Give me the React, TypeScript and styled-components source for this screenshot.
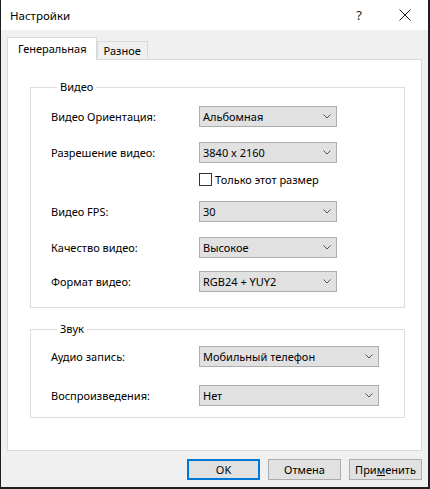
import styled, { createGlobalStyle } from "styled-components";

const GlobalStyle = createGlobalStyle`
  body {
    margin: 0;
    font-family: "Noto Sans", "Liberation Sans", sans-serif;
    font-size: 11px;
    color: #000;
  }
`;

const Window = styled.div`
  width: 430px;
  height: 489px;
  box-sizing: border-box;
  border-left: 1px solid #1f1f1f;
  border-right: 2px solid #1f1f1f;
  border-bottom: 2px solid #1f1f1f;
  display: flex;
  flex-direction: column;
  background: #f0f0f0;
`;

const TitleBar = styled.div`
  height: 30px;
  background: #fff;
  display: flex;
  align-items: center;
  padding-left: 9px;
  flex-shrink: 0;
`;

const Title = styled.div`
  flex: 1;
  font-size: 11.5px;
`;

const TitleButton = styled.div`
  width: 46px;
  height: 30px;
  display: flex;
  align-items: center;
  justify-content: center;
  font-size: 13px;
  color: #222;
`;

const Body = styled.div`
  flex: 1;
  padding: 7px 6px 0 6px;
  display: flex;
  flex-direction: column;
`;

const TabRow = styled.div`
  display: flex;
  align-items: flex-end;
  height: 22px;
`;

const Tab = styled.div<{ $active?: boolean }>`
  box-sizing: border-box;
  border: 1px solid #d9d9d9;
  border-bottom: none;
  background: ${(p) => (p.$active ? "#fff" : "#f0f0f0")};
  height: ${(p) => (p.$active ? "23px" : "18px")};
  margin-bottom: ${(p) => (p.$active ? "-1px" : "0")};
  padding: ${(p) => (p.$active ? "3px 9px 0 10px" : "0 6px 0 6px")};
  position: relative;
  z-index: ${(p) => (p.$active ? 1 : 0)};
  display: flex;
  align-items: ${(p) => (p.$active ? "flex-start" : "center")};
`;

const Panel = styled.div`
  box-sizing: border-box;
  height: 392px;
  border: 1px solid #d9d9d9;
  background: #fff;
  padding: 19px 0 0 22px;
`;

const Group = styled.fieldset<{ $top?: number }>`
  width: 375px;
  box-sizing: border-box;
  margin: ${(p) => p.$top ?? 0}px 0 0 0;
  border: 1px solid #dcdcdc;
  padding: 0 0 0 20px;
`;

const Legend = styled.legend`
  margin-left: 6px;
  padding: 0 3px;
  line-height: 16px;
  font-size: 11px;
`;

const Row = styled.div<{ $top: number }>`
  display: flex;
  align-items: center;
  height: 21px;
  margin-top: ${(p) => p.$top}px;
`;

const Label = styled.div`
  width: 148px;
`;

const Select = styled.div<{ $width: number }>`
  width: ${(p) => p.$width}px;
  height: 21px;
  box-sizing: border-box;
  border: 1px solid #adadad;
  background: #e1e1e1;
  padding: 0 5px 0 3px;
  display: flex;
  align-items: center;
  justify-content: space-between;
`;

const CheckRow = styled.div<{ $top: number }>`
  display: flex;
  align-items: center;
  height: 13px;
  margin: ${(p) => p.$top}px 0 0 148px;
  gap: 3px;
`;

const CheckBox = styled.div`
  width: 13px;
  height: 13px;
  box-sizing: border-box;
  border: 1px solid #333;
  background: #fff;
`;

const Spacer = styled.div<{ $h: number }>`
  height: ${(p) => p.$h}px;
`;

const ButtonRow = styled.div`
  display: flex;
  justify-content: flex-end;
  gap: 8px;
  margin-top: 8px;
`;

const Button = styled.div<{ $default?: boolean }>`
  width: 73px;
  height: 21px;
  box-sizing: border-box;
  background: #e1e1e1;
  border: ${(p) => (p.$default ? "2px solid #0078d7" : "1px solid #adadad")};
  display: flex;
  align-items: center;
  justify-content: center;
`;

const Chevron = () => (
  <svg width="8" height="5" viewBox="0 0 8 5">
    <polyline points="0.5,0.5 4,4 7.5,0.5" fill="none" stroke="#555" strokeWidth="1" />
  </svg>
);

const Combo = ({ value, width }: { value: string; width: number }) => (
  <Select $width={width}>
    <span>{value}</span>
    <Chevron />
  </Select>
);

export default function App() {
  return (
    <>
      <GlobalStyle />
      <Window>
        <TitleBar>
          <Title>Настройки</Title>
          <TitleButton>?</TitleButton>
          <TitleButton>
            <svg width="12" height="12" viewBox="0 0 12 12">
              <path d="M0.5 0.5 L11.5 11.5 M11.5 0.5 L0.5 11.5" stroke="#222" strokeWidth="1" />
            </svg>
          </TitleButton>
        </TitleBar>
        <Body>
          <TabRow>
            <Tab $active>Генеральная</Tab>
            <Tab>Разное</Tab>
          </TabRow>
          <Panel>
            <Group>
              <Legend>Видео</Legend>
              <Row $top={11}>
                <Label>Видео Ориентация:</Label>
                <Combo value="Альбомная" width={138} />
              </Row>
              <Row $top={15}>
                <Label>Разрешение видео:</Label>
                <Combo value="3840 x 2160" width={138} />
              </Row>
              <CheckRow $top={10}>
                <CheckBox />
                <span>Только этот размер</span>
              </CheckRow>
              <Row $top={15}>
                <Label>Видео FPS:</Label>
                <Combo value="30" width={138} />
              </Row>
              <Row $top={15}>
                <Label>Качество видео:</Label>
                <Combo value="Высокое" width={138} />
              </Row>
              <Row $top={13}>
                <Label>Формат видео:</Label>
                <Combo value="RGB24 + YUY2" width={138} />
              </Row>
              <Spacer $h={15} />
            </Group>
            <Group $top={13}>
              <Legend>Звук</Legend>
              <Row $top={9}>
                <Label>Аудио запись:</Label>
                <Combo value="Мобильный телефон" width={180} />
              </Row>
              <Row $top={18}>
                <Label>Воспроизведения:</Label>
                <Combo value="Нет" width={180} />
              </Row>
              <Spacer $h={11} />
            </Group>
          </Panel>
          <ButtonRow>
            <Button $default>OK</Button>
            <Button>Отмена</Button>
            <Button>
              <span>
                При<u>м</u>енить
              </span>
            </Button>
          </ButtonRow>
        </Body>
      </Window>
    </>
  );
}
